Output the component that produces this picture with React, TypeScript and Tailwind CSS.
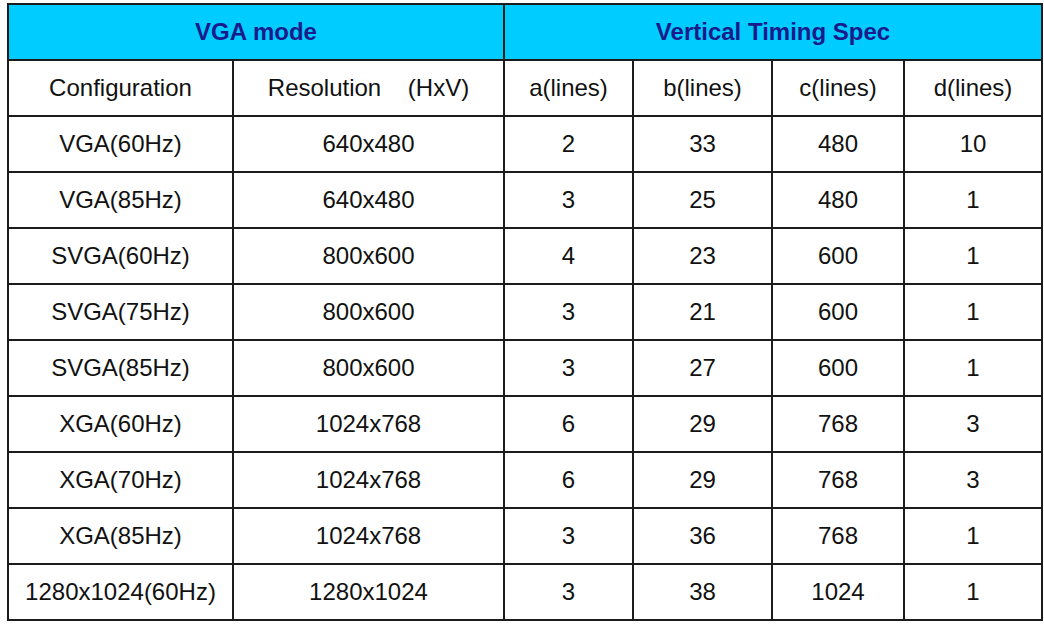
const rows = [
  ['VGA(60Hz)', '640x480', '2', '33', '480', '10'],
  ['VGA(85Hz)', '640x480', '3', '25', '480', '1'],
  ['SVGA(60Hz)', '800x600', '4', '23', '600', '1'],
  ['SVGA(75Hz)', '800x600', '3', '21', '600', '1'],
  ['SVGA(85Hz)', '800x600', '3', '27', '600', '1'],
  ['XGA(60Hz)', '1024x768', '6', '29', '768', '3'],
  ['XGA(70Hz)', '1024x768', '6', '29', '768', '3'],
  ['XGA(85Hz)', '1024x768', '3', '36', '768', '1'],
  ['1280x1024(60Hz)', '1280x1024', '3', '38', '1024', '1'],
]

const cell = 'border-2 border-[#1c1c1c] h-[56px] p-0 text-center align-middle'

export default function App() {
  return (
    <div className="w-[1044px] h-[624px] bg-white pt-[3px] pl-[7px] font-['Liberation_Sans',Arial,sans-serif] text-[24px] text-[#111]">
      <table className="border-collapse table-fixed w-[1034px]">
        <colgroup>
          <col className="w-[225px]" />
          <col className="w-[271px]" />
          <col className="w-[129px]" />
          <col className="w-[139px]" />
          <col className="w-[132px]" />
          <col className="w-[138px]" />
        </colgroup>
        <thead>
          <tr className="bg-[#00ccff] text-[#1a1a8a] font-bold">
            <th colSpan={2} className={cell + ' font-bold'}>VGA mode</th>
            <th colSpan={4} className={cell + ' font-bold'}>Vertical Timing Spec</th>
          </tr>
        </thead>
        <tbody>
          <tr>
            <td className={cell}>Configuration</td>
            <td className={cell + ' whitespace-pre'}>{'Resolution    (HxV)'}</td>
            <td className={cell}>a(lines)</td>
            <td className={cell}>b(lines)</td>
            <td className={cell}>c(lines)</td>
            <td className={cell}>d(lines)</td>
          </tr>
          {rows.map((r) => (
            <tr key={r[0]}>
              {r.map((v, i) => (
                <td key={i} className={cell}>{v}</td>
              ))}
            </tr>
          ))}
        </tbody>
      </table>
    </div>
  )
}
